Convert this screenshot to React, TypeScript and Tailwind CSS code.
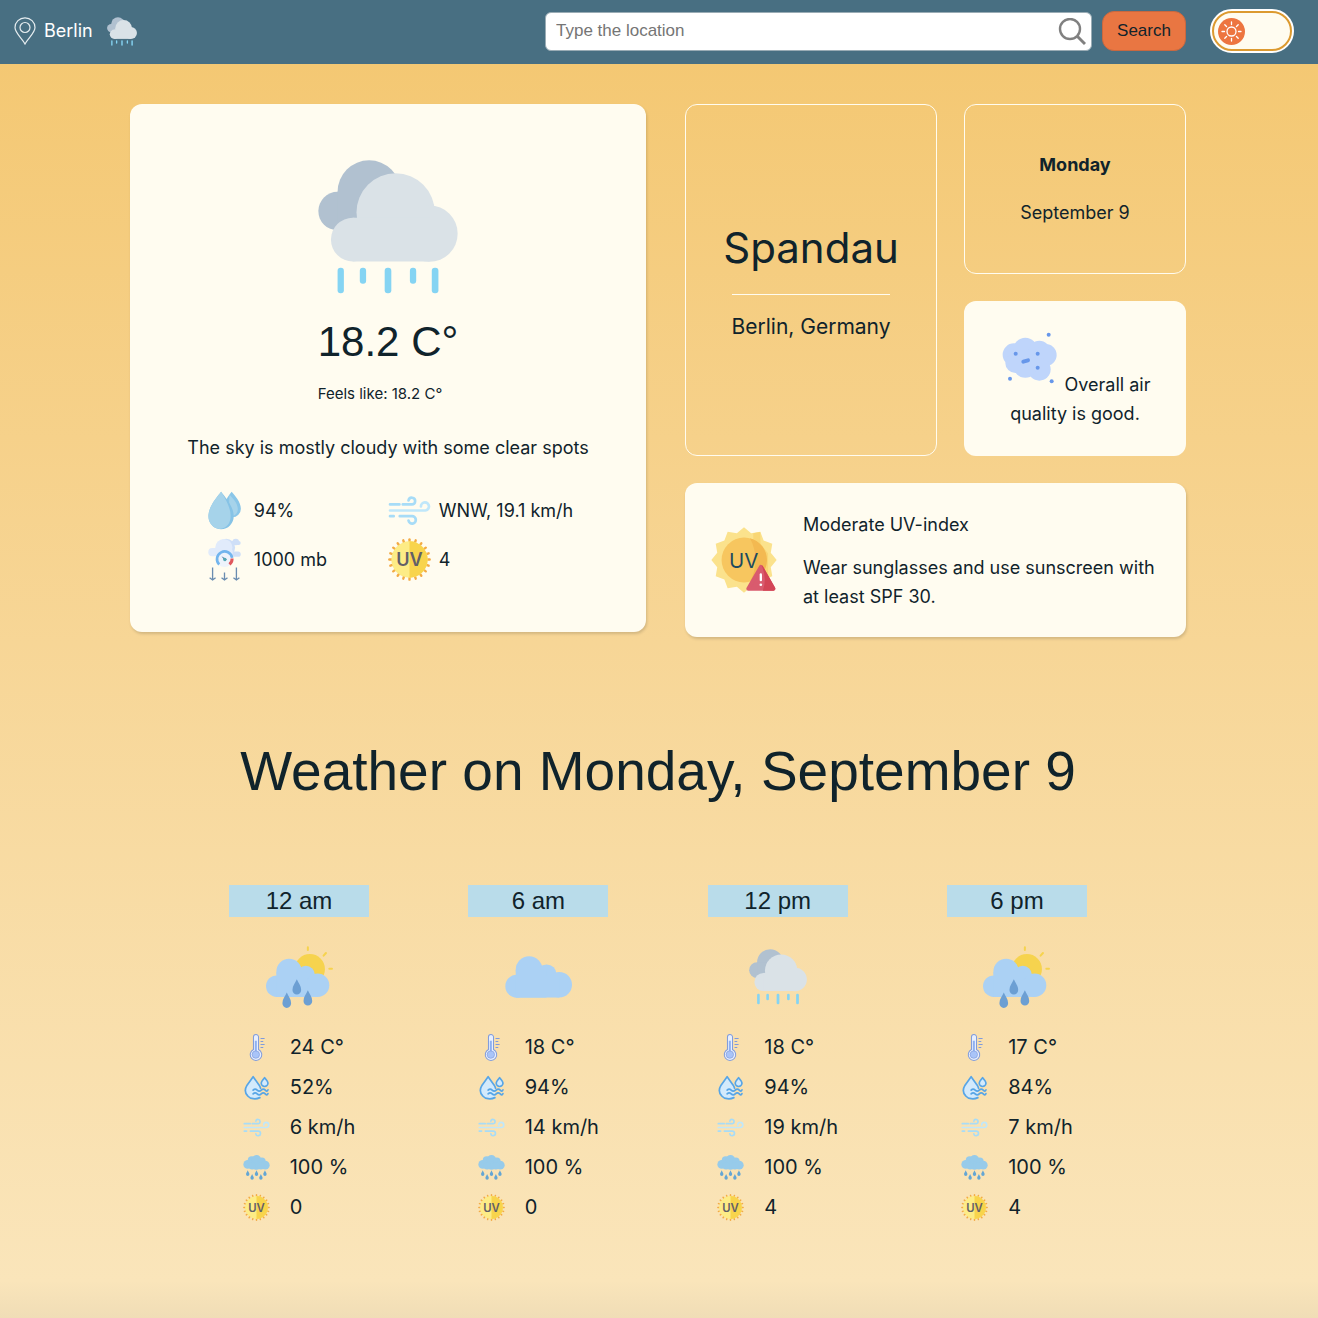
import React, { useState } from "react";

type IconProps = { className?: string };

const sans = "font-[Inter,sans-serif]";
const arial = "font-['Liberation_Sans',Arial,sans-serif]";

function RainCloud({ className }: IconProps) {
  return (
    <svg viewBox="51 59 422 404" className={className} aria-hidden="true">
      <g fill="#b1c1d0">
        <circle cx="205" cy="155" r="95" />
        <circle cx="110" cy="213" r="58" />
        <rect x="110" y="155" width="110" height="90" />
      </g>
      <g fill="#dae2e7">
        <circle cx="285" cy="217" r="118" />
        <circle cx="387" cy="281" r="85" />
        <circle cx="156" cy="299" r="66" />
        <rect x="156" y="233" width="231" height="132" />
      </g>
      <g fill="#85d4f3">
        <rect x="110" y="384" width="19" height="77" rx="9" />
        <rect x="177" y="384" width="19" height="48" rx="9" />
        <rect x="252" y="384" width="20" height="77" rx="9" />
        <rect x="328" y="384" width="19" height="48" rx="9" />
        <rect x="394" y="384" width="20" height="77" rx="9" />
      </g>
    </svg>
  );
}

function SunRain({ className }: IconProps) {
  const drop = "M0 0C5 11 13 20 13 32a13 14 0 0 1-26 0C-13 20-5 11 0 0Z";
  return (
    <svg viewBox="137 199 200 188" className={className} aria-hidden="true">
      <circle cx="268" cy="268" r="45" fill="#f6d34e" />
      <g stroke="#f6d34e" strokeWidth="6" strokeLinecap="round">
        <path d="M262 203v8M309 228l7-8M326 267h8" />
      </g>
      <g fill="#abd1f4">
        <circle cx="206" cy="275" r="38" />
        <circle cx="169" cy="319" r="32" />
        <circle cx="256" cy="285" r="27" />
        <circle cx="291" cy="316" r="35" />
        <rect x="168" y="277" width="90" height="74" />
        <rect x="168" y="300" width="122" height="51" />
      </g>
      <g fill="#6c9fd3">
        <path d={drop} transform="translate(229 298)" />
        <path d={drop} transform="translate(199 338)" />
        <path d={drop} transform="translate(262 331)" />
      </g>
    </svg>
  );
}

function Cloud({ className }: IconProps) {
  return (
    <svg viewBox="76 80 200 125" className={className} aria-hidden="true">
      <g fill="#abd1f4">
        <circle cx="148" cy="121" r="40" />
        <circle cx="111" cy="170" r="34" />
        <circle cx="200" cy="135" r="30" />
        <circle cx="238" cy="166" r="38" />
        <rect x="108" y="121" width="92" height="83" />
        <rect x="108" y="140" width="130" height="64" />
      </g>
    </svg>
  );
}

function Drops({ className }: IconProps) {
  return (
    <svg viewBox="44 29 126 126" className={className} aria-hidden="true">
      <path d="M128 37C137 48 155 66 155 87a25 25 0 0 1-50 0C105 66 119 48 128 37Z" fill="#8ac6e8" />
      <path d="M122 46C131 57 146 70 146 87c0 12-6 18-14 21-14-16-12-42-10-62Z" fill="#a6d3ea" />
      <path d="M97 37C109 53 134 80 134 109a37 38 0 0 1-74 0C60 80 85 53 97 37Z" fill="#86c3e6" />
      <path d="M97 37C107 52 125 82 125 108c0 22-12 36-32 38-19-1-33-16-33-37C60 80 85 53 97 37Z" fill="#a6d3ea" />
    </svg>
  );
}

function Pressure({ className }: IconProps) {
  return (
    <svg viewBox="44 174 126 130" className={className} aria-hidden="true">
      <g fill="#cfdff7">
        <circle cx="141" cy="186" r="10" />
        <rect x="126" y="183" width="30" height="12" rx="6" />
        <rect x="120" y="215" width="36" height="16" rx="8" />
        <circle cx="112" cy="203" r="27" />
      </g>
      <g fill="#e1ebfb">
        <circle cx="105" cy="203" r="26" />
        <rect x="58" y="204" width="74" height="25" rx="12" />
      </g>
      <circle cx="107" cy="237" r="25" fill="#eef3fb" />
      <path d="M91 254A23 23 0 1 1 130 234" fill="none" stroke="#72b5ee" strokeWidth="8" />
      <path d="M130 236A23 23 0 0 1 122 254" fill="none" stroke="#e0575c" strokeWidth="9" />
      <path d="M98 229l16 9-5 6Z" fill="#4d7fa8" />
      <circle cx="108" cy="239" r="5" fill="#55a9b4" />
      <path
        d="M71 263v36M62 294l9 7 9-7M107 278v22M98 294l9 7 9-7M143 263v36M134 294l9 7 9-7"
        fill="none"
        stroke="#6a8cb0"
        strokeWidth="4"
      />
    </svg>
  );
}

function Wind({ className }: IconProps) {
  return (
    <svg viewBox="31 29 128 126" className={className} aria-hidden="true">
      <g fill="none" strokeWidth="8" strokeLinecap="round">
        <path d="M37 92H142a12 12 0 1 0-13-12" stroke="#c0e7fa" />
        <path d="M37 74H65M75 74H102a10 10 0 1 0-10-12" stroke="#a7dcf7" />
        <path d="M37 109H48M66 109H102a11 11 0 1 1-10 13" stroke="#a7dcf7" />
      </g>
    </svg>
  );
}

function UvSun({ className }: IconProps) {
  const rays = Array.from({ length: 20 }, (_, i) => i * 18);
  return (
    <svg viewBox="0 0 128 128" className={className} aria-hidden="true">
      <g stroke="#f3ab45" strokeWidth="7" strokeLinecap="round">
        {rays.map((a) => (
          <path key={a} d="M64 4v12" transform={`rotate(${a} 64 64)`} />
        ))}
      </g>
      <circle cx="64" cy="64" r="54" fill="#fdec86" />
      <path d="M64 10a54 54 0 0 1 0 108Z" fill="#f8d44c" />
      <text
        x="64"
        y="84"
        textAnchor="middle"
        fontFamily="Inter, sans-serif"
        fontWeight="600"
        fontSize="54"
        fill="#625f68"
      >
        UV
      </text>
    </svg>
  );
}

function UvWarning({ className }: IconProps) {
  const points = Array.from({ length: 24 }, (_, i) => {
    const r = i % 2 ? 84 : 99;
    const a = (i * Math.PI) / 12;
    return `${(100 + r * Math.sin(a)).toFixed(1)},${(100 - r * Math.cos(a)).toFixed(1)}`;
  }).join(" ");
  return (
    <svg viewBox="0 0 200 200" className={className} aria-hidden="true">
      <polygon points={points} fill="#fbe28c" />
      <path d="M128 19l21-4 1 35 23 30V150H130Z" fill="#f9d674" />
      <circle cx="100" cy="100" r="68" fill="#f7c65f" />
      <path d="M118 34a68 68 0 0 1 0 132c22-38 22-94 0-132Z" fill="#f3b951" />
      <text
        x="99"
        y="123"
        textAnchor="middle"
        fontFamily="Inter, sans-serif"
        fontWeight="400"
        fontSize="62"
        fill="#1d4a60"
      >
        UV
      </text>
      <path d="M151 121l38 66H113Z" fill="#d95b6e" stroke="#d95b6e" strokeWidth="12" strokeLinejoin="round" />
      <path d="M153 116q3 0 5 4l36 63q3 9-5 10h-32q14-38-4-77Z" fill="#d34556" />
      <path d="M151 144v17" stroke="#fff" strokeWidth="7" strokeLinecap="round" />
      <circle cx="151" cy="175" r="4" fill="#fff" />
    </svg>
  );
}

function AirQuality({ className }: IconProps) {
  return (
    <svg viewBox="40 34 180 180" className={className} aria-hidden="true">
      <g fill="#bfd5fb">
        <circle cx="82" cy="105" r="34" />
        <circle cx="116" cy="90" r="36" />
        <circle cx="158" cy="95" r="32" />
        <circle cx="177" cy="106" r="33" />
        <circle cx="158" cy="149" r="34" />
        <circle cx="116" cy="138" r="36" />
        <circle cx="86" cy="130" r="30" />
      </g>
      <g fill="#6797ea">
        <circle cx="186" cy="45" r="6" />
        <circle cx="87" cy="102" r="6" />
        <circle cx="153" cy="102" r="6" />
        <circle cx="153" cy="144" r="6" />
        <circle cx="70" cy="177" r="6" />
        <circle cx="195" cy="185" r="6" />
      </g>
      <path d="M110 126l14-4" stroke="#6797ea" strokeWidth="12" strokeLinecap="round" />
    </svg>
  );
}

function Thermometer({ className }: IconProps) {
  return (
    <svg viewBox="66 42 80 80" className={className} aria-hidden="true">
      <path
        d="M97 88V51a7 7 0 0 1 15 0v37a17 17 0 1 1-15 0Z"
        fill="#e8effd"
        stroke="#7f9bdc"
        strokeWidth="3"
      />
      <path d="M104 62v36" stroke="#8fb0f0" strokeWidth="6" />
      <circle cx="104" cy="103" r="11" fill="#a9c4f8" stroke="#7f9bdc" strokeWidth="2" />
      <path d="M118 55h12M118 64h8M118 73h12M118 82h8" stroke="#7f9bdc" strokeWidth="3" />
    </svg>
  );
}

function Humidity({ className }: IconProps) {
  return (
    <svg viewBox="68 162 80 80" className={className} aria-hidden="true">
      <g fill="#d3eafc" stroke="#57a5e6" strokeWidth="5" strokeLinecap="round" strokeLinejoin="round">
        <path d="M118 232C106 238 90 236 82 227 72 217 74 205 80 195L98 170 116 195Q119 200 120 204" />
        <path d="M132 173c5 7 10 11 10 16a10 10 0 0 1-20 0c0-5 5-9 10-16Z" />
      </g>
      <path
        d="M98 210q6-6 12 0t12 0 12 0 8-1M98 221q6-6 12 0t12 0 12 0 8-1"
        fill="none"
        stroke="#57a5e6"
        strokeWidth="5"
        strokeLinecap="round"
      />
    </svg>
  );
}

function Showers({ className }: IconProps) {
  const drops = [
    [82, 455],
    [108, 455],
    [133, 455],
    [95, 466],
    [121, 466],
  ];
  return (
    <svg viewBox="68 407 80 80" className={className} aria-hidden="true">
      <g fill="#97cbea">
        <circle cx="82" cy="438" r="13" />
        <circle cx="94" cy="426" r="12" />
        <circle cx="108" cy="424" r="14" />
        <circle cx="124" cy="428" r="11" />
        <circle cx="134" cy="440" r="13" />
        <circle cx="108" cy="442" r="12" />
        <circle cx="95" cy="442" r="11" />
        <circle cx="121" cy="442" r="11" />
      </g>
      <g fill="#64a6d4">
        {drops.map(([x, y]) => (
          <path
            key={x}
            d="M0 0C2 5 5 8 5 12a5 5 0 0 1-10 0C-5 8-2 5 0 0Z"
            transform={`translate(${x} ${y})`}
          />
        ))}
      </g>
    </svg>
  );
}

function Pin({ className }: IconProps) {
  return (
    <svg viewBox="0 0 22 28" className={className} fill="none" stroke="#e6edf0" strokeWidth="1.2" aria-hidden="true">
      <path d="M11 27C8 21 1 16 1 10.500a10 9.700 0 0 1 20 0C21 16 14 21 11 27Z" />
      <circle cx="11" cy="10.500" r="5" />
    </svg>
  );
}

function ToggleSun({ className }: IconProps) {
  return (
    <svg viewBox="0 0 27 27" className={className} aria-hidden="true">
      <circle cx="13.500" cy="13.500" r="13.500" fill="#ed7540" />
      <circle cx="13.500" cy="13.500" r="4.500" fill="none" stroke="#fff" strokeWidth="1.300" />
      <g stroke="#fff" strokeWidth="1.300" strokeLinecap="round">
        {[0, 45, 90, 135, 180, 225, 270, 315].map((a) => (
          <path key={a} d="M13.500 4v2.500" transform={`rotate(${a} 13.500 13.500)`} />
        ))}
      </g>
    </svg>
  );
}

const metrics = [
  { Icon: Drops, value: "94%" },
  { Icon: Wind, value: "WNW, 19.1 km/h" },
  { Icon: Pressure, value: "1000 mb" },
  { Icon: UvSun, value: "4" },
];

const rowIcons = [Thermometer, Humidity, Wind, Showers, UvSun];

const hours = [
  { time: "12 am", icon: <SunRain className="w-[67px]" />, values: ["24 C°", "52%", "6 km/h", "100 %", "0"] },
  { time: "6 am", icon: <Cloud className="w-[67px]" />, values: ["18 C°", "94%", "14 km/h", "100 %", "0"] },
  { time: "12 pm", icon: <RainCloud className="w-[58px]" />, values: ["18 C°", "94%", "19 km/h", "100 %", "4"] },
  { time: "6 pm", icon: <SunRain className="w-[67px]" />, values: ["17 C°", "84%", "7 km/h", "100 %", "4"] },
];

function Header() {
  const [place, setPlace] = useState("");
  const [light, setLight] = useState(true);
  return (
    <header className="flex h-16 items-center justify-between bg-[#486f82] pr-6 pb-0.5 pl-3.5">
      <div className="flex items-center text-lg text-white">
        <Pin className="h-7 w-[22px]" />
        <span className="ml-2">Berlin</span>
        <RainCloud className="ml-3.5 h-[29px] w-[30px]" />
      </div>
      <div className="flex items-center">
        <form className={`flex items-center gap-2.5 text-[17px] ${arial}`} onSubmit={(e) => e.preventDefault()}>
          <div className="relative">
            <input
              type="search"
              aria-label="Location"
              placeholder="Type the location"
              value={place}
              onChange={(e) => setPlace(e.target.value)}
              className="h-[39px] w-[547px] rounded-md border border-[#9aacb5] bg-white pr-10 pl-2.5 text-[#10232b] outline-none placeholder:text-[#757575]"
            />
            <svg
              viewBox="0 0 28 28"
              className="pointer-events-none absolute top-1.5 right-1.5 size-7"
              fill="none"
              stroke="#808080"
              strokeWidth="2.400"
              aria-hidden="true"
            >
              <circle cx="12" cy="11" r="10" />
              <path d="M19 18l8 8" strokeWidth="3" />
            </svg>
          </div>
          <button
            type="submit"
            className="h-10 w-[84px] rounded-xl border border-[#c9683f] bg-[#e97642] text-[#10232b]"
          >
            Search
          </button>
        </form>
        <label className="ml-6 flex h-11 w-[84px] cursor-pointer items-center rounded-full border-2 border-white bg-white">
          <input
            type="checkbox"
            role="switch"
            aria-label="Light theme"
            checked={light}
            onChange={(e) => setLight(e.target.checked)}
            className="sr-only"
          />
          <span className="flex size-full items-center rounded-full border-2 border-[#dc9a30] bg-[#fffcf0] pl-1">
            <ToggleSun className="size-[27px]" />
          </span>
        </label>
      </div>
    </header>
  );
}

export default function App() {
  return (
    <div className={`flex min-h-screen flex-col text-lg text-[#10232b] ${sans}`}>
      <Header />
      <main className="flex grow flex-col bg-linear-to-b from-[#f4c873] via-[#fae5ba] via-97% to-[#f0ddb6] pt-10 pr-[26px] pb-[90px] pl-6">
        <section className="mx-auto flex w-full max-w-[1056px] items-start gap-[39px]">
          <article className="flex w-[516px] shrink-0 flex-col items-center rounded-xl bg-[#fffcf0] pt-14 pb-12 shadow-[1px_2px_3px_rgba(0,0,0,0.15)]">
            <RainCloud className="h-[134px] w-[140px]" />
            <div className="mt-[18px]">
              <p className={`text-[42px] leading-[60px] ${arial}`}>18.2 C°</p>
              <p className="mt-2.5 text-[15px] leading-6">Feels like: 18.2 C°</p>
            </div>
            <p className="mt-7 leading-7">The sky is mostly cloudy with some clear spots</p>
            <ul className="mt-6 grid grid-cols-[185px_auto] justify-center">
              {metrics.map(({ Icon, value }) => (
                <li key={value} className="flex h-[49px] items-center gap-2">
                  <Icon className="size-[43px]" />
                  {value}
                </li>
              ))}
            </ul>
          </article>

          <div className="grid grow grid-cols-[252px_1fr] gap-x-[27px] gap-y-[27px]">
            <div className="row-span-2 flex flex-col items-center justify-center rounded-xl border border-[#fffcf0]">
              <h1 className="text-[42px] leading-[60px]">Spandau</h1>
              <hr className="my-4 w-[158px] border-[#fffcf0]" />
              <p className="text-[21px] leading-8">Berlin, Germany</p>
            </div>
            <div className="flex h-[170px] flex-col items-center justify-center gap-5 rounded-xl border border-[#fffcf0] leading-7">
              <p className="font-bold">Monday</p>
              <p>September 9</p>
            </div>
            <div className="h-[155px] rounded-xl bg-[#fffcf0] px-7 pt-[30px] text-center leading-[29px]">
              <AirQuality className="inline size-[60px] align-baseline" /> Overall air quality is good.
            </div>
            <div className="col-span-2 flex h-[154px] items-center gap-[26px] rounded-xl bg-[#fffcf0] px-[26px] leading-[29px] shadow-[1px_2px_3px_rgba(0,0,0,0.15)]">
              <UvWarning className="size-[66px] shrink-0" />
              <div>
                <p>Moderate UV-index</p>
                <p className="mt-3.5">Wear sunglasses and use sunscreen with at least SPF 30.</p>
              </div>
            </div>
          </div>
        </section>

        <h2 className={`mt-[102px] text-center text-[55px] leading-16 ${arial}`}>Weather on Monday, September 9</h2>

        <section className="mx-auto mt-[82px] flex w-full max-w-[858px] justify-between">
          {hours.map((hour) => (
            <article key={hour.time} className="flex w-[140px] flex-col items-center">
              <h3 className={`w-full bg-[#b9dcea] text-center text-2xl ${arial}`}>{hour.time}</h3>
              <div className="mt-7 flex h-16 items-center">{hour.icon}</div>
              <ul className="mt-[18px] text-xl">
                {hour.values.map((value, i) => {
                  const Icon = rowIcons[i];
                  return (
                    <li key={i} className="flex h-10 items-center gap-5">
                      <Icon className="size-[27px]" />
                      {value}
                    </li>
                  );
                })}
              </ul>
            </article>
          ))}
        </section>
      </main>
    </div>
  );
}
